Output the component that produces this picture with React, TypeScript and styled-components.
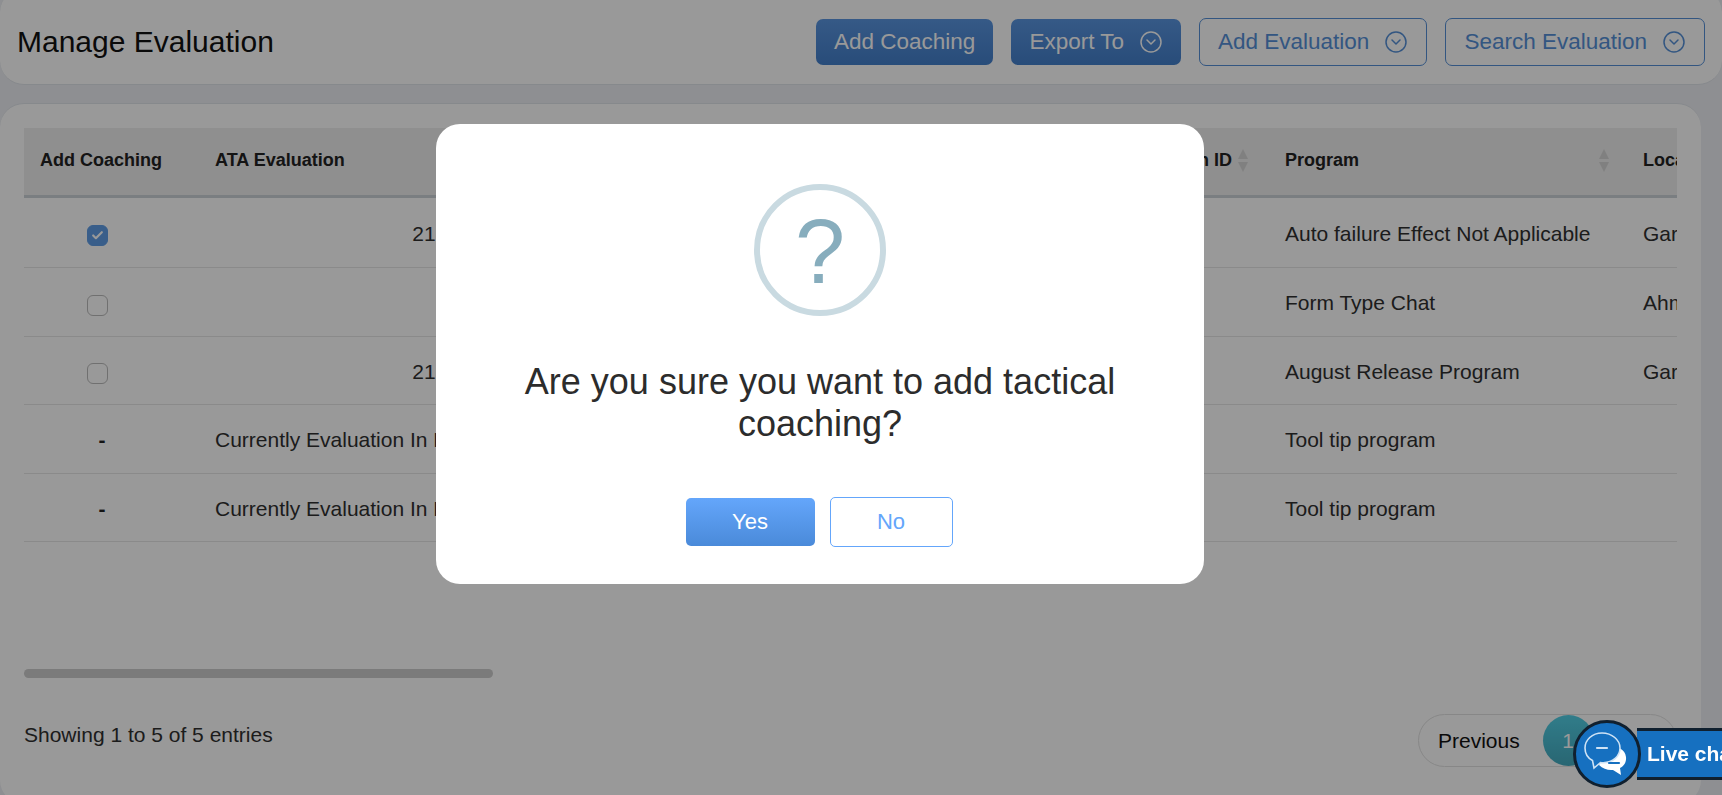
import styled, { createGlobalStyle } from 'styled-components';
import { Check, CircleChevronDown } from 'lucide-react';

interface Evaluation {
  id: number;
  checked?: boolean;
  coaching: boolean;
  ata: string;
  program: string;
  location: string;
}

const rows: Evaluation[] = [
  { id: 1, coaching: true, checked: true, ata: '21', program: 'Auto failure Effect Not Applicable', location: 'Garden City' },
  { id: 2, coaching: true, ata: '', program: 'Form Type Chat', location: 'Ahmedabad' },
  { id: 3, coaching: true, ata: '21', program: 'August Release Program', location: 'Garden City' },
  { id: 4, coaching: false, ata: 'Currently Evaluation In Progress', program: 'Tool tip program', location: '' },
  { id: 5, coaching: false, ata: 'Currently Evaluation In Progress', program: 'Tool tip program', location: '' },
];

function SortArrows() {
  return (
    <SortIcon viewBox="0 0 10 23" aria-hidden="true">
      <path d="M5 0l5 10H0z" />
      <path d="M5 23l5-10H0z" />
    </SortIcon>
  );
}

function ChatIcon() {
  return (
    <svg width="50" height="50" viewBox="0 0 50 50" fill="none" aria-hidden="true">
      <path
        d="M26 17c8-1 17 3 18 11 .6 5-2 9-6 11l1 7-8-5c-5 .5-10-1-14-5z"
        fill="#fff"
      />
      <path
        d="M20 4C10 4 3 11 3 19c0 5.500 2.800 10 7.500 12.500L12 39l6.500-5.500c1 .2 1.800.2 2.800.2 9.500 0 16.700-6.500 16.700-14.700C38 11 30 4 20 4z"
        fill="#1670c0"
        stroke="#cfe3f5"
        strokeWidth="1.600"
      />
      <path d="M15 19h10" stroke="#cfe3f5" strokeWidth="2.200" strokeLinecap="round" />
      <path d="M27 34h10" stroke="#1670c0" strokeWidth="2.200" strokeLinecap="round" />
    </svg>
  );
}

export default function App() {
  return (
    <>
      <GlobalStyle />
      <Page>
        <Header>
          <Title>Manage Evaluation</Title>
          <Actions>
            <Button>Add Coaching</Button>
            <Button>
              Export To <CircleChevronDown size={24} strokeWidth={1.5} />
            </Button>
            <OutlineButton>
              Add Evaluation <CircleChevronDown size={24} strokeWidth={1.5} />
            </OutlineButton>
            <OutlineButton>
              Search Evaluation <CircleChevronDown size={24} strokeWidth={1.5} />
            </OutlineButton>
          </Actions>
        </Header>

        <Card>
          <TableScroll>
            <Table>
              <colgroup>
                <Col $w={175} />
                <Col $w={450} />
                <Col $w={620} />
                <Col $w={358} />
                <Col $w={200} />
              </colgroup>
              <thead>
                <tr>
                  <Th>Add Coaching</Th>
                  <Th>ATA Evaluation</Th>
                  <Th>
                    <HeadInner $end>
                      Evaluation ID <SortArrows />
                    </HeadInner>
                  </Th>
                  <Th>
                    <HeadInner>
                      Program <SortArrows />
                    </HeadInner>
                  </Th>
                  <Th>Location</Th>
                </tr>
              </thead>
              <tbody>
                {rows.map((row) => (
                  <Row key={row.id}>
                    <CoachCell>
                      {row.coaching ? (
                        <CheckBox $checked={row.checked}>
                          {row.checked && <Check size={13} strokeWidth={4} color="#fff" />}
                        </CheckBox>
                      ) : (
                        <Dash>-</Dash>
                      )}
                    </CoachCell>
                    <AtaCell $center={row.coaching}>{row.ata}</AtaCell>
                    <Td />
                    <Td>{row.program}</Td>
                    <Td>{row.location}</Td>
                  </Row>
                ))}
              </tbody>
            </Table>
          </TableScroll>
          <ScrollThumb />
          <Footer>
            <Info>Showing 1 to 5 of 5 entries</Info>
            <Pager>
              <PageLink>Previous</PageLink>
              <PageCurrent>1</PageCurrent>
              <PageLink>Next</PageLink>
            </Pager>
          </Footer>
        </Card>
      </Page>

      <Overlay>
        <Modal>
          <QuestionRing>?</QuestionRing>
          <ModalTitle>Are you sure you want to add tactical coaching?</ModalTitle>
          <ModalActions>
            <YesButton>Yes</YesButton>
            <NoButton>No</NoButton>
          </ModalActions>
        </Modal>
      </Overlay>

      <ChatWidget>
        <ChatCircle>
          <ChatIcon />
        </ChatCircle>
        <ChatLabel>Live chat</ChatLabel>
      </ChatWidget>
    </>
  );
}

const GlobalStyle = createGlobalStyle`
  html, body {
    margin: 0;
    height: 795px;
    overflow: hidden;
    background: #edeff3;
    font-family: "Liberation Sans", Arial, sans-serif;
    color: #303030;
  }
`;

const Page = styled.div`
  height: 795px;
  overflow: hidden;
`;

const Header = styled.header`
  display: flex;
  align-items: center;
  justify-content: space-between;
  box-sizing: border-box;
  height: 97px;
  margin-top: -12px;
  padding: 11px 17px 0 17px;
  background: #fff;
  border: 1px solid #e0e4ea;
  border-width: 1px 0 1px 0;
  border-radius: 24px;
`;

const Title = styled.h1`
  margin: 0;
  font-size: 30px;
  font-weight: 400;
  color: #111;
`;

const Actions = styled.div`
  display: flex;
  align-items: center;
  gap: 18px;
`;

const Button = styled.button`
  display: flex;
  align-items: center;
  gap: 15px;
  height: 46px;
  padding: 0 18px;
  border: 0;
  border-radius: 7px;
  background: linear-gradient(#5a95e0, #437fcb);
  color: #fff;
  font: 22.500px "Liberation Sans", Arial, sans-serif;
`;

const OutlineButton = styled(Button)`
  height: 48px;
  border: 1px solid #5590d8;
  background: #fff;
  color: #5590d8;
`;

const Card = styled.main`
  box-sizing: border-box;
  width: 1701px;
  height: 701px;
  margin-top: 18px;
  padding: 24px 24px 0;
  background: #fff;
  border: 1px solid #e0e4ea;
  border-width: 1px 0 0 0;
  border-radius: 24px;
`;

const TableScroll = styled.div`
  height: 541px;
  overflow: hidden;
`;

const Table = styled.table`
  width: 1803px;
  table-layout: fixed;
  border-collapse: collapse;
`;

const Col = styled.col<{ $w: number }>`
  width: ${(p) => p.$w}px;
`;

const Th = styled.th`
  height: 64px;
  padding: 0 18px 3px 16px;
  background: #eee;
  border-bottom: 3px solid #ccd2d8;
  font-size: 18px;
  font-weight: 700;
  text-align: left;
  color: #222;
  white-space: nowrap;
`;

const HeadInner = styled.div<{ $end?: boolean }>`
  display: flex;
  align-items: center;
  justify-content: ${(p) => (p.$end ? 'flex-end' : 'space-between')};
  gap: 6px;
  padding-right: ${(p) => (p.$end ? 3 : 0)}px;
`;

const SortIcon = styled.svg`
  flex: none;
  width: 10px;
  height: 23px;
  fill: #d6d6d6;
`;

const Td = styled.td`
  box-sizing: border-box;
  height: 69px;
  padding: 2px 16px 0;
  border-bottom: 1px solid #e6e6e6;
  font-size: 21px;
  white-space: nowrap;
  overflow: hidden;
`;

const Row = styled.tr`
  &:first-child td {
    height: 71px;
  }
  &:nth-child(3) td,
  &:nth-child(5) td {
    height: 68px;
  }
`;

const CoachCell = styled(Td)`
  padding: 2px 19px 0 0;
  text-align: center;
`;

const AtaCell = styled(Td)<{ $center: boolean }>`
  text-align: ${(p) => (p.$center ? 'center' : 'left')};
`;

const CheckBox = styled.span<{ $checked?: boolean }>`
  display: inline-flex;
  align-items: center;
  justify-content: center;
  box-sizing: border-box;
  width: 21px;
  height: 21px;
  margin: 4px 10px 0 0;
  vertical-align: middle;
  border: 1px solid ${(p) => (p.$checked ? '#5f9de6' : '#bbb')};
  border-radius: 6px;
  background: ${(p) => (p.$checked ? '#5f9de6' : '#fff')};
`;

const Dash = styled.b`
  font-size: 21px;
  color: #222;
`;

const ScrollThumb = styled.div`
  width: 469px;
  height: 9px;
  border-radius: 5px;
  background: #cdcdcd;
`;

const Footer = styled.div`
  display: flex;
  align-items: center;
  justify-content: space-between;
  margin-top: 36px;
`;

const Info = styled.div`
  margin-bottom: 12px;
  font-size: 21px;
`;

const Pager = styled.nav`
  display: flex;
  align-items: center;
  box-sizing: border-box;
  width: 259px;
  height: 53px;
  border: 1px solid #e2e2e2;
  border-radius: 27px;
`;

const PageLink = styled.span`
  padding: 0 23px 0 19px;
  font-size: 21px;
  color: #111;
`;

const PageCurrent = styled.span`
  display: flex;
  flex: none;
  align-items: center;
  justify-content: center;
  width: 51px;
  height: 51px;
  border-radius: 50%;
  background: linear-gradient(#52d0e6, #44aabf);
  color: #fff;
  font-size: 21px;
`;

const Overlay = styled.div`
  position: fixed;
  inset: 0;
  padding: 124px 0 0 436px;
  background: rgba(0, 0, 0, 0.4);
`;

const Modal = styled.div`
  display: flex;
  flex-direction: column;
  align-items: center;
  box-sizing: border-box;
  width: 768px;
  height: 460px;
  padding-top: 60px;
  background: #fff;
  border-radius: 24px;
`;

const QuestionRing = styled.div`
  display: flex;
  align-items: center;
  justify-content: center;
  box-sizing: border-box;
  width: 132px;
  height: 132px;
  padding-top: 3px;
  border: 6px solid #c9dae1;
  border-radius: 50%;
  color: #87adbd;
  font-size: 90px;
  line-height: 1;
`;

const ModalTitle = styled.h2`
  width: 620px;
  margin: 45px 0 0;
  font-size: 36px;
  font-weight: 400;
  line-height: 42px;
  text-align: center;
  color: #2c2c2c;
`;

const ModalActions = styled.div`
  display: flex;
  align-items: center;
  gap: 15px;
  margin-top: 52px;
  padding-right: 2px;
`;

const YesButton = styled.button`
  width: 129px;
  height: 48px;
  border: 0;
  border-radius: 5px;
  background: linear-gradient(#64a6fb, #4a8ad9);
  color: #fff;
  font: 22px "Liberation Sans", Arial, sans-serif;
`;

const NoButton = styled.button`
  width: 123px;
  height: 50px;
  border: 1px solid #64a6fb;
  border-radius: 5px;
  background: #fff;
  color: #64a6fb;
  font: 22px "Liberation Sans", Arial, sans-serif;
`;

const ChatWidget = styled.div`
  position: fixed;
  left: 1573px;
  right: 0;
  bottom: 7px;
  display: flex;
  align-items: center;
  height: 68px;
  overflow: hidden;
`;

const ChatCircle = styled.div`
  position: relative;
  z-index: 1;
  display: flex;
  flex: none;
  align-items: center;
  justify-content: center;
  box-sizing: border-box;
  width: 68px;
  height: 68px;
  border: 3px solid #10202f;
  border-radius: 50%;
  background: #1670c0;
`;

const ChatLabel = styled.div`
  flex: 1;
  box-sizing: border-box;
  height: 52px;
  margin-left: -4px;
  padding-left: 10px;
  background: #1670c0;
  border: solid #10202f;
  border-width: 3px 0;
  color: #fff;
  font-size: 21px;
  font-weight: 700;
  line-height: 46px;
  white-space: nowrap;
`;
